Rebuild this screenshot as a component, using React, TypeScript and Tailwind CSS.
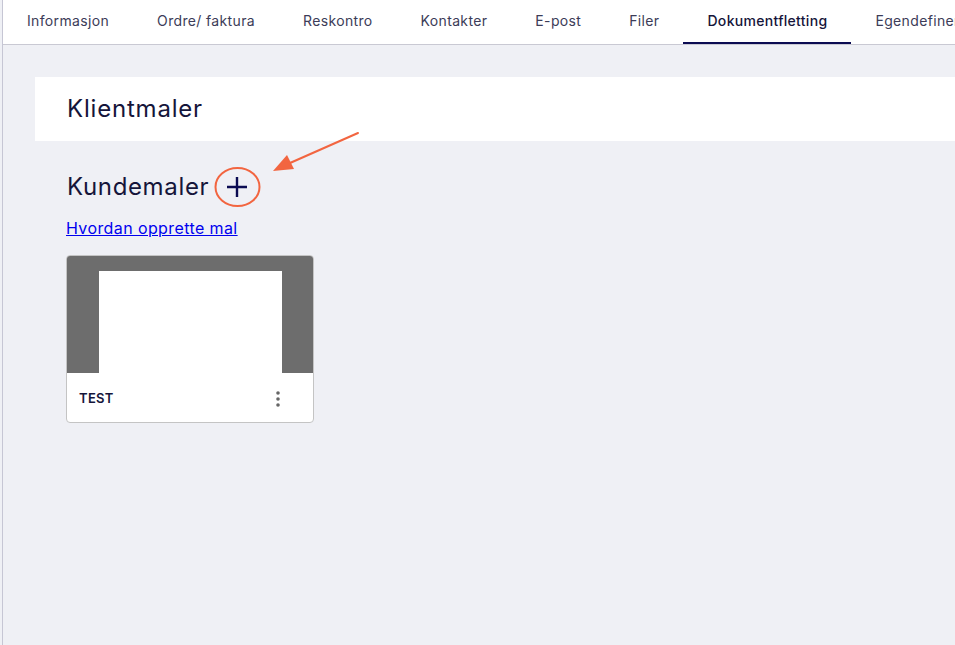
import React from 'react';

const tabs = [
  'Informasjon',
  'Ordre/ faktura',
  'Reskontro',
  'Kontakter',
  'E-post',
  'Filer',
  'Dokumentfletting',
  'Egendefinerte felt',
];

const App: React.FC = () => {
  return (
    <div
      className="w-[955px] h-[645px] overflow-hidden bg-[#eff0f5] flex relative"
      style={{ fontFamily: 'Inter, "Noto Sans", sans-serif' }}
    >
      <div className="w-[2px] shrink-0 bg-[#eff0f5]" />
      <div className="flex-1 flex flex-col border-l border-[#c6c6d4] min-w-0">
        {/* Tabs */}
        <div className="h-[45px] shrink-0 bg-white border-b border-[#c9c9d3] flex whitespace-nowrap overflow-hidden">
          {tabs.map((t) => {
            const active = t === 'Dokumentfletting';
            return (
              <div
                key={t}
                className={
                  active
                    ? 'px-6 h-full flex items-center text-[14px] tracking-[0.3px] text-[#15153a] font-medium border-b-2 border-[#0b0b52] pb-[2px]'
                    : 'px-6 h-full flex items-center text-[14px] tracking-[0.35px] text-[#3c3c58] pb-[4px]'
                }
              >
                {t}
              </div>
            );
          })}
        </div>

        {/* Content */}
        <div className="flex-1 pt-8 pl-8">
          <div className="h-16 bg-white flex items-center pl-8">
            <h1 className="text-[24px] text-[#15153a] tracking-[0.8px]">Klientmaler</h1>
          </div>

          <div className="pl-8 pt-[30px]">
            <div className="flex items-center h-8">
              <h2 className="text-[24px] text-[#15153a] tracking-[0.65px]">Kundemaler</h2>
              <svg width="24" height="24" viewBox="0 0 24 24" className="ml-[16px]">
                <path d="M12 2v20M2 12h20" stroke="#0b0b52" strokeWidth="2.4" />
              </svg>
            </div>
            <a
              href="#"
              className="inline-block mt-[13px] -ml-px text-[16px] tracking-[0.4px] text-[#0000ee] underline"
            >
              Hvordan opprette mal
            </a>

            <div className="mt-[15px] -ml-px w-[248px] rounded-[4px] overflow-hidden border border-[#c4c4c4] bg-white">
              <div className="h-[118px] bg-[#6d6d6d] pt-4 px-8 -mt-px -mx-px">
                <div className="h-full bg-white ml-px" />
              </div>
              <div className="h-[49px] flex items-center justify-between pl-[12px] pr-[33px] pt-[2px]">
                <span className="text-[13px] font-semibold tracking-[0.3px] text-[#15153a]">TEST</span>
                <svg width="4" height="16" viewBox="0 0 4 16">
                  <circle cx="2" cy="2" r="1.8" fill="#666" />
                  <circle cx="2" cy="8" r="1.8" fill="#666" />
                  <circle cx="2" cy="14" r="1.8" fill="#666" />
                </svg>
              </div>
            </div>
          </div>
        </div>
      </div>

      {/* Annotation overlay */}
      <svg
        className="absolute left-0 top-0 pointer-events-none"
        width="955"
        height="645"
        viewBox="0 0 955 645"
      >
        <ellipse cx="237.5" cy="187" rx="22" ry="19" fill="none" stroke="#f26540" strokeWidth="2" />
        <line x1="358" y1="133" x2="290" y2="163" stroke="#f26540" strokeWidth="2" strokeLinecap="round" />
        <polygon points="273,171 287,155 294,169" fill="#f26540" />
      </svg>
    </div>
  );
};

export default App;
